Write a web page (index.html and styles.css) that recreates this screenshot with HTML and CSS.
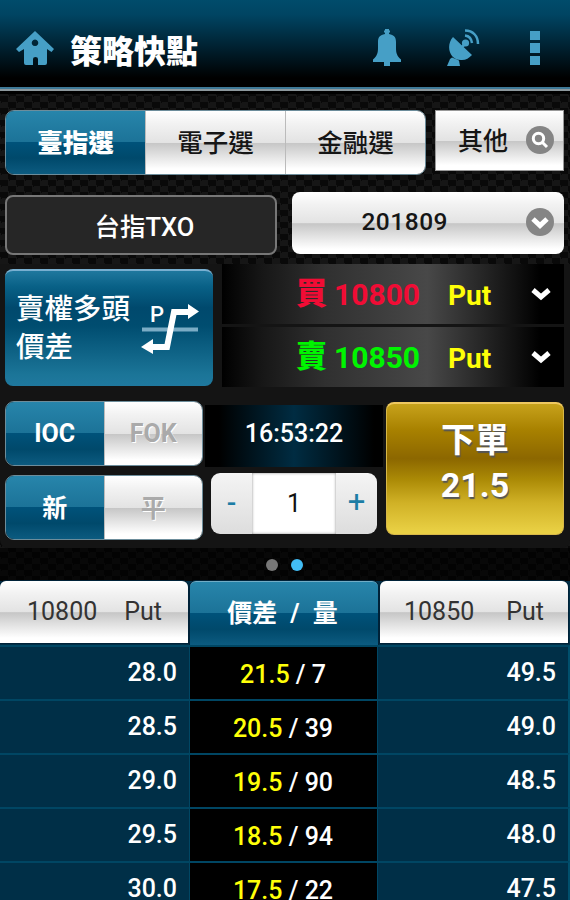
FILE: index.html
```html
<!DOCTYPE html>
<html lang="zh-Hant">
  <head>
    <meta charset="UTF-8" />
    <meta name="viewport" content="width=device-width, initial-scale=1.0" />
    <title>策略快點</title>
    <link rel="stylesheet" href="styles.css">
  </head>
  <body>
    <header class="header">
      <svg class="icon-home" viewBox="0 0 38 34">
        <path fill-rule="evenodd" d="M19 0 38 18 35.500 21 31 18V32Q31 34 29 34H22V28Q22 26 19.500 26T17 28V34H10Q8 34 8 32V18L3 21 0 18ZM19 8.500a3.300 3.300 0 1 0 .01 0Z" />
      </svg>
      <h1 class="title">策略快點</h1>
      <svg class="icon-bell" viewBox="0 0 28 38">
        <path d="M12 0H16V1.500H17V3.500H16V5C21 6 23 8 23 13V19C23 24 24 27 28 30.500V33H17V37H11V33H0V30.500C4 27 5 24 5 19V13C5 8 7 6 12 5V3.500H11V1.500H12Z" />
      </svg>
      <svg class="icon-dish" viewBox="0 0 33 38">
        <path d="M6 8C-2 17 3 32 15 31C19 31 22 29 25 26ZM5 28.500 12 31.500 13 37H0L3 30Z" />
        <path class="stroke" d="M14 19 19 14" />
        <circle cx="18.500" cy="14" r="3.600" />
        <path class="stroke" d="M18 6.500C22 7 24.500 10 25 14M18 1.500C26 1.500 31 7 31 15" />
      </svg>
      <div class="menu">
        <i></i>
        <i></i>
        <i></i>
      </div>
    </header>

    <main>
      <div class="filter-row">
        <div class="tabs">
          <div class="tab active">臺指選</div>
          <div class="tab">電子選</div>
          <div class="tab">金融選</div>
        </div>
        <div class="other">
          <span>其他</span>
          <svg class="badge" viewBox="0 0 28 28">
            <circle cx="14" cy="14" r="14" />
            <circle class="mark" cx="12.500" cy="12.500" r="5.200" />
            <path class="mark" d="M16.500 16.500 21 21" />
          </svg>
        </div>
      </div>

      <div class="contract-row">
        <div class="product">台指TXO</div>
        <div class="month">
          <span>201809</span>
          <svg class="badge" viewBox="0 0 28 28">
            <circle cx="14" cy="14" r="14" />
            <path class="mark chevron" d="M7 11 14 17.500 21 11" />
          </svg>
        </div>
      </div>

      <section class="panel">
        <div class="strategy-row">
          <div class="strategy">
            <span class="strategy-name">賣權多頭<br />價差</span>
            <svg class="payoff" viewBox="0 0 58 50">
              <path class="axis" d="M1 25.500H57" />
              <text x="9" y="18">P</text>
              <path class="line" d="M10 43H26L33 8H49" />
              <path class="arrow" d="M47 0 58 7.500 47 15ZM12 35 0 43 12 50Z" />
            </svg>
          </div>
          <div class="legs">
            <div class="leg">
              <span class="side buy">買</span>
              <span class="strike buy">10800</span>
              <span class="type">Put</span>
              <svg class="arrow-down" viewBox="0 0 20 14"><path d="M2 3 10 10 18 3" /></svg>
            </div>
            <div class="leg">
              <span class="side sell">賣</span>
              <span class="strike sell">10850</span>
              <span class="type">Put</span>
              <svg class="arrow-down" viewBox="0 0 20 14"><path d="M2 3 10 10 18 3" /></svg>
            </div>
          </div>
        </div>

        <div class="order-row">
          <div class="switches">
            <div class="switch">
              <div class="tab active">IOC</div>
              <div class="tab off">FOK</div>
            </div>
            <div class="switch">
              <div class="tab active">新</div>
              <div class="tab off">平</div>
            </div>
          </div>
          <div class="entry">
            <div class="clock">16:53:22</div>
            <div class="stepper">
              <div class="step minus">-</div>
              <div class="quantity">1</div>
              <div class="step plus">+</div>
            </div>
          </div>
          <div class="submit">
            <span class="submit-label">下單</span>
            <span class="submit-price">21.5</span>
          </div>
        </div>
      </section>

      <div class="pager">
        <i></i>
        <i class="current"></i>
      </div>

      <div class="quotes">
        <div class="head"><span>10800</span><span>Put</span></div>
        <div class="head mid">價差 / 量</div>
        <div class="head"><span>10850</span><span>Put</span></div>

        <div class="price">28.0</div>
        <div class="spread"><b>21.5</b> / 7</div>
        <div class="price">49.5</div>

        <div class="price">28.5</div>
        <div class="spread"><b>20.5</b> / 39</div>
        <div class="price">49.0</div>

        <div class="price">29.0</div>
        <div class="spread"><b>19.5</b> / 90</div>
        <div class="price">48.5</div>

        <div class="price">29.5</div>
        <div class="spread"><b>18.5</b> / 94</div>
        <div class="price">48.0</div>

        <div class="price">30.0</div>
        <div class="spread"><b>17.5</b> / 22</div>
        <div class="price">47.5</div>
      </div>
    </main>
  </body>
</html>
```

FILE: styles.css
```css
* {
  box-sizing: border-box;
}
body {
  margin: 0;
  height: 900px;
  overflow: hidden;
  font-family: Roboto, "Noto Sans CJK TC", sans-serif;
  color: #fff;
  /* woven carbon background */
  background-color: #090909;
  background-image:
    linear-gradient(45deg, #161616 25%, transparent 25%, transparent 75%, #161616 75%),
    linear-gradient(45deg, #161616 25%, transparent 25%, transparent 75%, #161616 75%);
  background-size: 16px 12px;
  background-position: 0 0, 8px 6px;
}
svg {
  display: block;
  flex: none;
}

/* header */
.header {
  display: flex;
  align-items: center;
  height: 94px;
  padding: 6px 30px 4px 16px;
  background:
    linear-gradient(#3e7896, #3e7896) 0 87px / 100% 2px no-repeat,
    linear-gradient(#8d989d, #8d989d) 0 89px / 100% 2px no-repeat,
    linear-gradient(#004c6b 0, #004462 15px, #00202f 48px, #000 78px);
}
.header svg {
  fill: #469fc6;
}
.icon-home {
  width: 38px;
  height: 34px;
}
.title {
  flex: 1;
  margin: 7px 0 0 16px;
  font-size: 32px;
  line-height: 40px;
  font-weight: 900;
}
.icon-bell {
  width: 28px;
  height: 38px;
}
.icon-dish {
  width: 33px;
  height: 38px;
  margin: 0 50px 0 46px;
}
.header .stroke {
  fill: none;
  stroke: #469fc6;
  stroke-width: 2.500;
}
.menu {
  display: flex;
  flex-direction: column;
  gap: 3px;
}
.menu i {
  width: 10px;
  height: 9.500px;
  background: #469fc6;
}

/* buttons */
.tab,
.other,
.month,
.head {
  background: linear-gradient(#fff 0, #f2f2f2 20%, #e3e3e3 50%, #c6c6c6 51%, #dedede 68%, #fff 92%);
  color: #161616;
}
.tab {
  display: flex;
  align-items: center;
  justify-content: center;
  flex: 1;
  padding-bottom: 4px;
  font-weight: 500;
}
.tab + .tab {
  border-left: 1px solid #bbb;
}
.tab.active,
.head.mid {
  background: linear-gradient(#2785ab 0, #1c7398 49%, #00527a 50%, #00496b 75%, #0c5b80 100%);
  color: #fff;
  font-weight: 700;
}
.tab.off {
  color: #aaa;
  text-shadow: 1px 1px 0 #fff;
}
.filter-row,
.contract-row {
  display: flex;
  align-items: flex-start;
  padding: 0 6px 0 5px;
}
.filter-row {
  gap: 9px;
  padding-top: 16px;
}
.tabs,
.switch {
  display: flex;
  overflow: hidden;
  border-radius: 9px;
  border: 1px solid #6d8d9b;
}
.tabs {
  width: 421px;
  height: 65px;
  font-size: 25.500px;
}
.tabs .active {
  font-weight: 900;
}
.other {
  display: flex;
  align-items: center;
  justify-content: space-between;
  flex: 1;
  height: 61px;
  padding: 0 9px 2px 22px;
  border: 1px solid #999;
  font-size: 25px;
  font-weight: 500;
}
.other span {
  padding-bottom: 2px;
}
.badge {
  width: 28px;
  height: 28px;
  fill: #858585;
}
.mark {
  fill: none;
  stroke: #fff;
  stroke-width: 3;
}
.mark.chevron {
  stroke-width: 5;
}
.contract-row {
  gap: 15px;
  padding-top: 17px;
}
.product {
  width: 272px;
  height: 60px;
  margin-top: 3px;
  padding-left: 7px;
  border: 2px solid #777;
  border-radius: 8px;
  background: #262626;
  font-size: 25.500px;
  line-height: 61px;
  text-align: center;
  font-weight: 500;
}
.month {
  display: flex;
  align-items: center;
  justify-content: flex-end;
  flex: 1;
  height: 62px;
  padding: 0 10px 2px 0;
  border-radius: 8px;
  font-size: 24.500px;
  font-weight: 500;
  letter-spacing: 0.500px;
}
.month span {
  margin: 0 78px 2px 0;
}

/* order panel */
.panel {
  height: 284px;
  margin-top: 9px;
  padding: 0 6px 0 5px;
  border-radius: 0 0 8px 8px;
  background: #141414;
}
.strategy-row {
  display: flex;
  gap: 9px;
}
.strategy {
  display: flex;
  align-items: center;
  width: 208px;
  height: 117px;
  margin-top: 5px;
  padding: 1px 0 0 11px;
  border-top: 2px solid #78afd0;
  border-radius: 8px;
  background: linear-gradient(#1f789e 0, #086086 14%, #00496d 32%, #004d70 48%, #1b7598 90%, #1f789e 100%);
}
.strategy-name {
  width: 125px;
  font-size: 28.500px;
  line-height: 38px;
  font-weight: 500;
  white-space: nowrap;
}
.payoff {
  width: 58px;
  height: 50px;
}
.payoff .axis {
  stroke: #7bacc5;
  stroke-width: 4;
}
.payoff .line {
  fill: none;
  stroke: #fff;
  stroke-width: 6;
}
.payoff .arrow,
.payoff text {
  fill: #fff;
}
.payoff text {
  font-size: 22px;
  font-weight: 500;
}
.legs {
  display: flex;
  flex-direction: column;
  gap: 3px;
  flex: 1;
}
.leg {
  display: flex;
  align-items: center;
  height: 60px;
  padding-left: 74px;
  background: linear-gradient(90deg, #000 0, #171717 12%, #303030 30%, #484848 60%, #222 78%, #000 93%);
  font-size: 28px;
  font-weight: 700;
}
.side {
  width: 38px;
  font-size: 31px;
  line-height: 40px;
  font-weight: 900;
}
.strike {
  width: 114px;
  font-size: 30px;
}
.buy {
  color: #f10c35;
}
.sell {
  color: #00f500;
}
.type {
  width: 83px;
  color: #ffff08;
  padding-top: 2px;
}
.arrow-down {
  width: 20px;
  height: 14px;
  fill: none;
  stroke: #fff;
  stroke-width: 5;
}
.order-row {
  display: flex;
  padding-top: 14px;
}
.switches {
  display: flex;
  flex-direction: column;
  gap: 9px;
  width: 198px;
}
.switch {
  height: 65px;
  font-size: 25px;
}
.switch .tab {
  padding-bottom: 0;
}
.switch .tab.off {
  font-weight: 700;
}
.switch:last-child .tab {
  padding-bottom: 4px;
}
.entry {
  width: 178px;
  margin: 4px 0 0 2px;
}
.clock {
  height: 62px;
  background: linear-gradient(90deg, #000 8%, #002c42 50%, #000 95%);
  font-size: 25px;
  font-weight: 500;
  line-height: 58px;
  text-align: center;
}
.stepper {
  display: flex;
  width: 166px;
  height: 61px;
  margin: 6px 0 0 6px;
  border-radius: 9px;
  overflow: hidden;
  background: linear-gradient(#f4f4f4, #ddd);
  color: #1c7da5;
  font-size: 28px;
  line-height: 59px;
  text-align: center;
}
.step {
  width: 41px;
}
.minus {
  font-weight: 500;
}
.plus {
  font-size: 31px;
  line-height: 57px;
}
.quantity {
  flex: 1;
  background: #fff;
  color: #111;
  font-size: 25px;
  line-height: 61px;
  box-shadow: inset 0 0 3px #888;
}
.submit {
  display: flex;
  flex-direction: column;
  align-items: center;
  flex: 1;
  height: 133px;
  margin: 1px 0 0 3px;
  padding-top: 17px;
  border: 1px solid #d8b848;
  border-top: 2px solid #efc860;
  border-radius: 8px;
  background: linear-gradient(#c7a21b 0, #a88100 20%, #8c6700 42%, #ab8a06 58%, #d0b126 76%, #e9d044 98%);
  font-weight: 700;
  text-shadow: 1px 2px 1px #555;
}
.submit-label {
  font-size: 34px;
  line-height: 38px;
}
.submit-price {
  font-size: 34px;
  line-height: 52px;
}

/* page dots */
.pager {
  display: flex;
  align-items: center;
  gap: 13px;
  height: 33px;
  padding: 1px 0 0 266px;
  background: rgba(0, 0, 0, 0.6);
}
.pager i {
  width: 12px;
  height: 12px;
  border-radius: 50%;
  background: #777;
}
.pager i.current {
  background: #42bdf5;
}

/* quotes table */
.quotes {
  display: grid;
  grid-template-columns: 189px 189px 192px;
  background: #002f47;
}
.head {
  display: flex;
  align-items: center;
  gap: 27px;
  height: 62px;
  margin: 0 1px 1px 0;
  padding: 0 0 1px 27px;
  border-radius: 6px 6px 0 0;
  font-size: 25px;
  color: #333;
  box-shadow: 0 0 0 1px #002238;
}
.head:nth-child(3) {
  margin: 0 2px 1px 2px;
  padding-left: 24px;
  gap: 32px;
}
.head.mid {
  justify-content: center;
  height: 64px;
  margin: 0 0 0 1px;
  padding: 0 3px 5px 0;
  border-top: 1px solid #71adc6;
  font-weight: 700;
  word-spacing: 7px;
}
.price,
.spread {
  height: 54px;
  border-top: 2px solid #004663;
  font-size: 25px;
  font-weight: 500;
  line-height: 51px;
}
.price {
  padding-right: 12px;
  text-align: right;
}
.price:nth-child(3n) {
  padding-right: 12px;
  border-right: 2px solid #004f6c;
}
.spread {
  padding-right: 1px;
  background: #000;
  border-left: 1px solid #004663;
  border-right: 1px solid #004663;
  line-height: 56px;
  text-align: center;
}
.spread b {
  color: #ffff08;
  font-weight: 500;
}
```
